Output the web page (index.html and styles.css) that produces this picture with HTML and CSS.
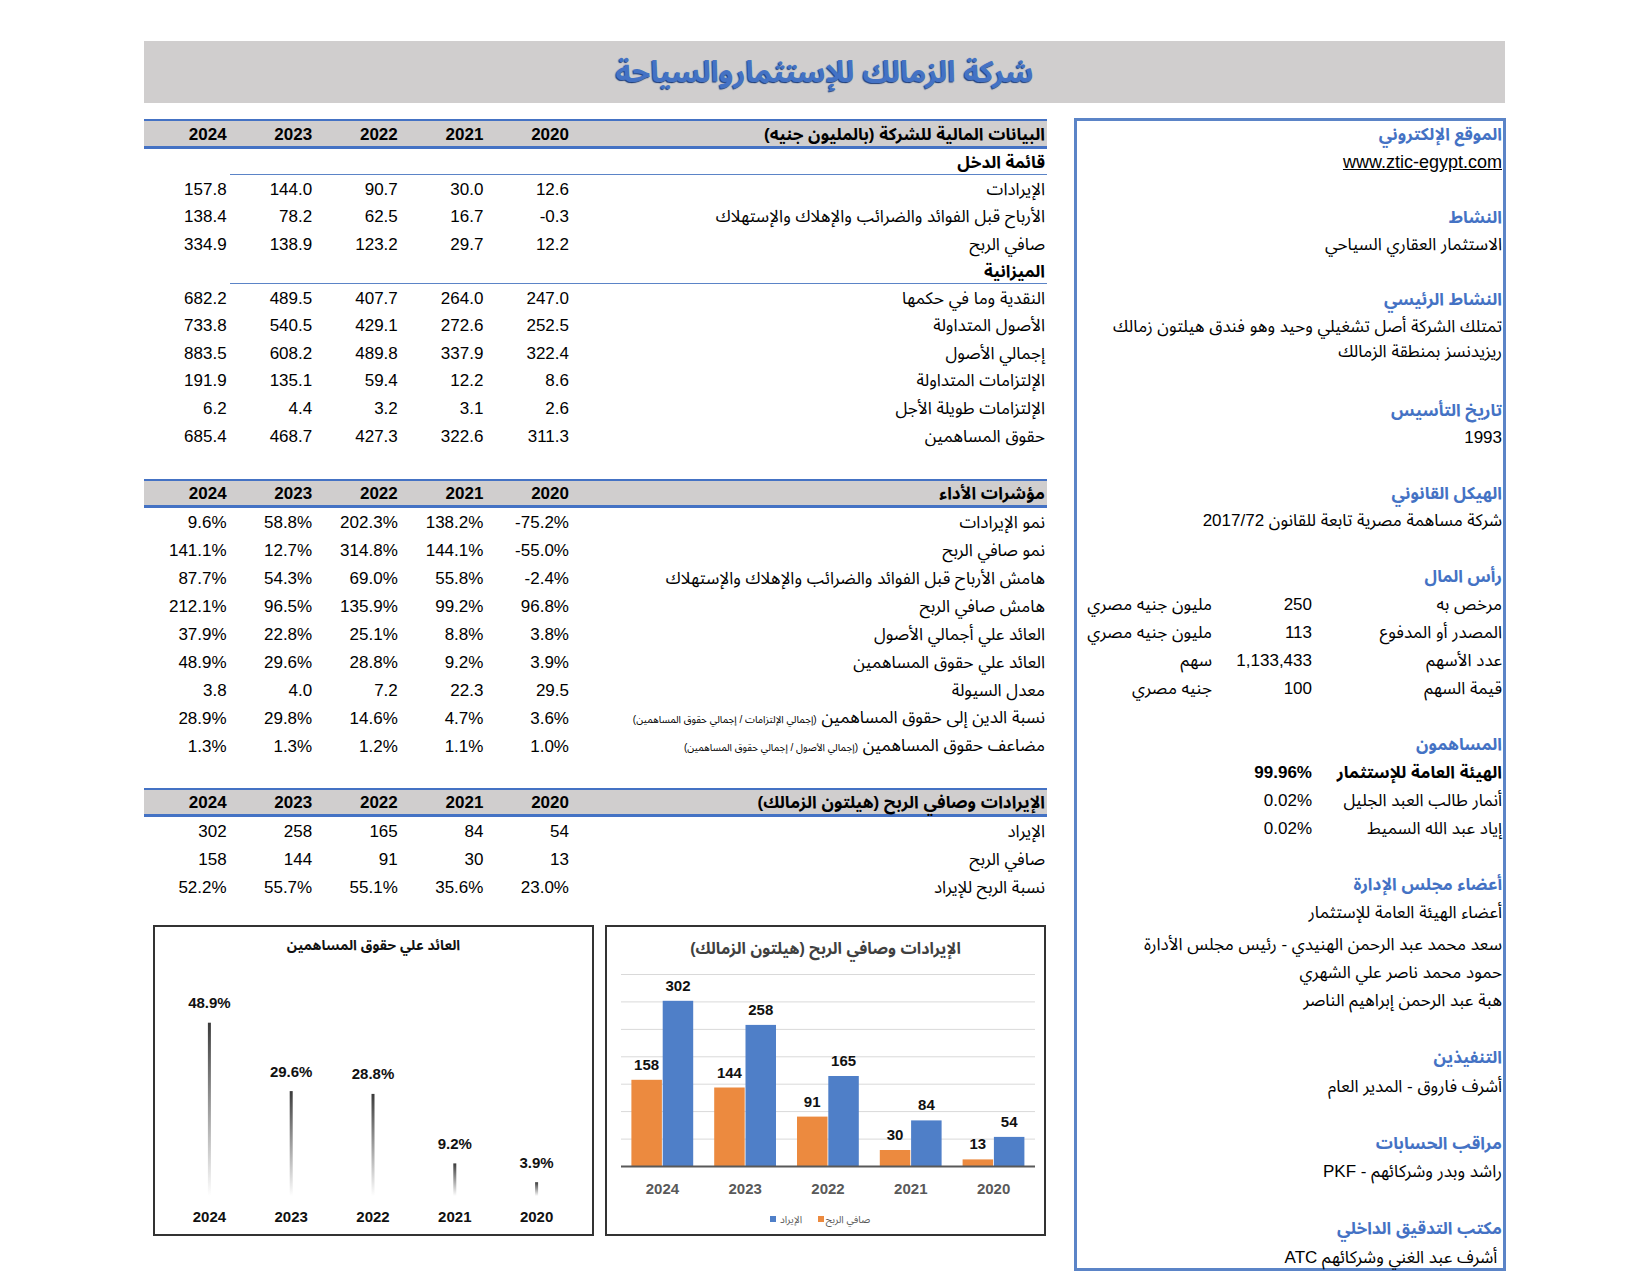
FILE: index.html
```html
<!DOCTYPE html>
<html lang="ar">
<head>
<meta charset="utf-8">
<title>شركة الزمالك للإستثمار والسياحة</title>
<link rel="stylesheet" href="styles.css">
</head>
<body>
<div class="page">
  <div class="title-band"><h1 class="title">شركة الزمالك للإستثماروالسياحة</h1></div>

  <div class="main" dir="rtl">
    <aside class="info">
      <div class="ir lbl">الموقع الإلكتروني</div>
      <div class="ir"><span class="link">www.ztic-egypt.com</span></div>
      <div class="ir"></div>
      <div class="ir lbl">النشاط</div>
      <div class="ir">الاستثمار العقاري السياحي</div>
      <div class="ir"></div>
      <div class="ir lbl">النشاط الرئيسي</div>
      <div class="ir-block">تمتلك الشركة أصل تشغيلي وحيد وهو فندق هيلتون زمالك<br>ريزيدنسز بمنطقة الزمالك</div>
      <div class="ir"></div>
      <div class="ir lbl">تاريخ التأسيس</div>
      <div class="ir">1993</div>
      <div class="ir"></div>
      <div class="ir lbl">الهيكل القانوني</div>
      <div class="jr">شركة مساهمة مصرية تابعة للقانون 2017/72</div>
      <div class="jr"></div>
      <div class="jr lbl">رأس المال</div>
      <div class="jr kv"><span>مرخص به</span><span class="num">250</span><span>مليون جنيه مصري</span></div>
      <div class="jr kv"><span>المصدر أو المدفوع</span><span class="num">113</span><span>مليون جنيه مصري</span></div>
      <div class="jr kv"><span>عدد الأسهم</span><span class="num">1,133,433</span><span>سهم</span></div>
      <div class="jr kv"><span>قيمة السهم</span><span class="num">100</span><span>جنيه مصري</span></div>
      <div class="jr"></div>
      <div class="jr lbl">المساهمون</div>
      <div class="jr kv strong"><span>الهيئة العامة للإستثمار</span><span class="num">99.96%</span></div>
      <div class="jr kv"><span>أنمار طالب العبد الجليل</span><span class="num">0.02%</span></div>
      <div class="jr kv"><span>إياد عبد الله السميط</span><span class="num">0.02%</span></div>
      <div class="jr"></div>
      <div class="jr lbl">أعضاء مجلس الإدارة</div>
      <div class="jr">أعضاء الهيئة العامة للإستثمار</div>
      <div class="jr tall">سعد محمد عبد الرحمن الهنيدي - رئيس مجلس الأدارة</div>
      <div class="jr">حمود محمد ناصر علي الشهري</div>
      <div class="jr">هبة عبد الرحمن إبراهيم الناصر</div>
      <div class="lr"></div>
      <div class="lr lbl">التنفيذين</div>
      <div class="lr">أشرف فاروق - المدير العام</div>
      <div class="lr"></div>
      <div class="lr lbl">مراقب الحسابات</div>
      <div class="lr">راشد وبدر وشركائهم - PKF</div>
      <div class="lr"></div>
      <div class="lr lbl">مكتب التدقيق الداخلي</div>
      <div class="lr">&nbsp;أشرف عبد الغني وشركائهم ATC</div>
    </aside>

    <section class="left">
      <div class="sec s1">
        <div class="thead">
          <div class="c">البيانات المالية للشركة (بالمليون جنيه)</div>
          <div class="c n">2020</div><div class="c n">2021</div><div class="c n">2022</div><div class="c n">2023</div><div class="c n">2024</div>
        </div>
        <div class="tr sub line"><div class="c b">قائمة الدخل</div></div>
        <div class="tr"><div class="c">الإيرادات</div><div class="c n">12.6</div><div class="c n">30.0</div><div class="c n">90.7</div><div class="c n">144.0</div><div class="c n">157.8</div></div>
        <div class="tr"><div class="c">الأرباح قبل الفوائد والضرائب والإهلاك والإستهلاك</div><div class="c n">-0.3</div><div class="c n">16.7</div><div class="c n">62.5</div><div class="c n">78.2</div><div class="c n">138.4</div></div>
        <div class="tr"><div class="c">صافي الربح</div><div class="c n">12.2</div><div class="c n">29.7</div><div class="c n">123.2</div><div class="c n">138.9</div><div class="c n">334.9</div></div>
        <div class="tr sub line"><div class="c b">الميزانية</div></div>
        <div class="tr"><div class="c">النقدية وما في حكمها</div><div class="c n">247.0</div><div class="c n">264.0</div><div class="c n">407.7</div><div class="c n">489.5</div><div class="c n">682.2</div></div>
        <div class="tr"><div class="c">الأصول المتداولة</div><div class="c n">252.5</div><div class="c n">272.6</div><div class="c n">429.1</div><div class="c n">540.5</div><div class="c n">733.8</div></div>
        <div class="tr"><div class="c">إجمالي الأصول</div><div class="c n">322.4</div><div class="c n">337.9</div><div class="c n">489.8</div><div class="c n">608.2</div><div class="c n">883.5</div></div>
        <div class="tr"><div class="c">الإلتزامات المتداولة</div><div class="c n">8.6</div><div class="c n">12.2</div><div class="c n">59.4</div><div class="c n">135.1</div><div class="c n">191.9</div></div>
        <div class="tr"><div class="c">الإلتزامات طويلة الأجل</div><div class="c n">2.6</div><div class="c n">3.1</div><div class="c n">3.2</div><div class="c n">4.4</div><div class="c n">6.2</div></div>
        <div class="tr"><div class="c">حقوق المساهمين</div><div class="c n">311.3</div><div class="c n">322.6</div><div class="c n">427.3</div><div class="c n">468.7</div><div class="c n">685.4</div></div>
      </div>

      <div class="sec s2">
        <div class="thead">
          <div class="c">مؤشرات الأداء</div>
          <div class="c n">2020</div><div class="c n">2021</div><div class="c n">2022</div><div class="c n">2023</div><div class="c n">2024</div>
        </div>
        <div class="tr"><div class="c">نمو الإيرادات</div><div class="c n">-75.2%</div><div class="c n">138.2%</div><div class="c n">202.3%</div><div class="c n">58.8%</div><div class="c n">9.6%</div></div>
        <div class="tr"><div class="c">نمو صافي الربح</div><div class="c n">-55.0%</div><div class="c n">144.1%</div><div class="c n">314.8%</div><div class="c n">12.7%</div><div class="c n">141.1%</div></div>
        <div class="tr"><div class="c">هامش الأرباح قبل الفوائد والضرائب والإهلاك والإستهلاك</div><div class="c n">-2.4%</div><div class="c n">55.8%</div><div class="c n">69.0%</div><div class="c n">54.3%</div><div class="c n">87.7%</div></div>
        <div class="tr"><div class="c">هامش صافي الربح</div><div class="c n">96.8%</div><div class="c n">99.2%</div><div class="c n">135.9%</div><div class="c n">96.5%</div><div class="c n">212.1%</div></div>
        <div class="tr"><div class="c">العائد علي أجمالي الأصول</div><div class="c n">3.8%</div><div class="c n">8.8%</div><div class="c n">25.1%</div><div class="c n">22.8%</div><div class="c n">37.9%</div></div>
        <div class="tr"><div class="c">العائد علي حقوق المساهمين</div><div class="c n">3.9%</div><div class="c n">9.2%</div><div class="c n">28.8%</div><div class="c n">29.6%</div><div class="c n">48.9%</div></div>
        <div class="tr"><div class="c">معدل السيولة</div><div class="c n">29.5</div><div class="c n">22.3</div><div class="c n">7.2</div><div class="c n">4.0</div><div class="c n">3.8</div></div>
        <div class="tr"><div class="c">نسبة الدين إلى حقوق المساهمين <span class="sm">(إجمالي الإلتزامات / إجمالي حقوق المساهمين)</span></div><div class="c n">3.6%</div><div class="c n">4.7%</div><div class="c n">14.6%</div><div class="c n">29.8%</div><div class="c n">28.9%</div></div>
        <div class="tr"><div class="c">مضاعف حقوق المساهمين <span class="sm">(إجمالي الأصول / إجمالي حقوق المساهمين)</span></div><div class="c n">1.0%</div><div class="c n">1.1%</div><div class="c n">1.2%</div><div class="c n">1.3%</div><div class="c n">1.3%</div></div>
      </div>

      <div class="sec s3">
        <div class="thead">
          <div class="c">الإيرادات وصافي الربح (هيلتون الزمالك)</div>
          <div class="c n">2020</div><div class="c n">2021</div><div class="c n">2022</div><div class="c n">2023</div><div class="c n">2024</div>
        </div>
        <div class="tr"><div class="c">الإيراد</div><div class="c n">54</div><div class="c n">84</div><div class="c n">165</div><div class="c n">258</div><div class="c n">302</div></div>
        <div class="tr"><div class="c">صافي الربح</div><div class="c n">13</div><div class="c n">30</div><div class="c n">91</div><div class="c n">144</div><div class="c n">158</div></div>
        <div class="tr"><div class="c">نسبة الربح للإيراد</div><div class="c n">23.0%</div><div class="c n">35.6%</div><div class="c n">55.1%</div><div class="c n">55.7%</div><div class="c n">52.2%</div></div>
      </div>

      <div class="charts">
        <div class="chart">
          <svg width="437" height="307" viewBox="0 0 437 307">
            <text class="ct-title" x="218.5" y="27" text-anchor="middle">الإيرادات وصافي الربح (هيلتون الزمالك)</text>
            <g class="grid">
              <line x1="14" x2="428" y1="47.5" y2="47.5"/>
              <line x1="14" x2="428" y1="74.9" y2="74.9"/>
              <line x1="14" x2="428" y1="102.4" y2="102.4"/>
              <line x1="14" x2="428" y1="129.8" y2="129.8"/>
              <line x1="14" x2="428" y1="157.2" y2="157.2"/>
              <line x1="14" x2="428" y1="184.6" y2="184.6"/>
              <line x1="14" x2="428" y1="212.1" y2="212.1"/>
            </g>
            <g class="bars-o">
              <rect x="24.4" y="152.8" width="30.5" height="86.7"/>
              <rect x="107.2" y="160.5" width="30.5" height="79.0"/>
              <rect x="190.0" y="189.6" width="30.5" height="49.9"/>
              <rect x="272.8" y="223.0" width="30.5" height="16.5"/>
              <rect x="355.6" y="232.4" width="30.5" height="7.1"/>
            </g>
            <g class="bars-b">
              <rect x="55.7" y="73.8" width="30.5" height="165.7"/>
              <rect x="138.5" y="97.9" width="30.5" height="141.6"/>
              <rect x="221.3" y="149.0" width="30.5" height="90.5"/>
              <rect x="304.1" y="193.4" width="30.5" height="46.1"/>
              <rect x="386.9" y="209.9" width="30.5" height="29.6"/>
            </g>
            <line class="axis" x1="14" x2="428" y1="239.5" y2="239.5"/>
            <g class="dl">
              <text x="39.6" y="142.8">158</text>
              <text x="122.4" y="150.5">144</text>
              <text x="205.2" y="179.6">91</text>
              <text x="288" y="213">30</text>
              <text x="370.8" y="222.4">13</text>
              <text x="71" y="63.8">302</text>
              <text x="153.8" y="87.9">258</text>
              <text x="236.6" y="139">165</text>
              <text x="319.4" y="183.4">84</text>
              <text x="402.2" y="199.9">54</text>
            </g>
            <g class="yr">
              <text x="55.4" y="266.5">2024</text>
              <text x="138.2" y="266.5">2023</text>
              <text x="221" y="266.5">2022</text>
              <text x="303.8" y="266.5">2021</text>
              <text x="386.6" y="266.5">2020</text>
            </g>
            <rect class="lg-b" x="163" y="289" width="6" height="6"/>
            <text class="lg" x="184" y="296" text-anchor="middle">الإيراد</text>
            <rect class="lg-o" x="211" y="289" width="6" height="6"/>
            <text class="lg" x="241" y="296" text-anchor="middle">صافي الربح</text>
          </svg>
        </div>
        <div class="chart">
          <svg width="437" height="307" viewBox="0 0 437 307">
            <defs>
              <linearGradient id="fade" x1="0" y1="0" x2="0" y2="1">
                <stop offset="0" stop-color="#3b3b3b"/>
                <stop offset="1" stop-color="#3b3b3b" stop-opacity="0"/>
              </linearGradient>
            </defs>
            <text class="ct-title2" x="218.5" y="23" text-anchor="middle">العائد علي حقوق المساهمين</text>
            <g fill="url(#fade)">
              <rect x="52.9" y="95.7" width="3" height="173.3"/>
              <rect x="134.7" y="164.1" width="3" height="104.9"/>
              <rect x="216.5" y="166.9" width="3" height="102.1"/>
              <rect x="298.3" y="236.4" width="3" height="32.6"/>
              <rect x="380.1" y="255.2" width="3" height="13.8"/>
            </g>
            <g class="pl">
              <text x="54.4" y="81">48.9%</text>
              <text x="136.2" y="149.6">29.6%</text>
              <text x="218" y="152.4">28.8%</text>
              <text x="299.8" y="221.9">9.2%</text>
              <text x="381.6" y="240.7">3.9%</text>
            </g>
            <g class="py">
              <text x="54.4" y="295">2024</text>
              <text x="136.2" y="295">2023</text>
              <text x="218" y="295">2022</text>
              <text x="299.8" y="295">2021</text>
              <text x="381.6" y="295">2020</text>
            </g>
          </svg>
        </div>
      </div>
    </section>
  </div>
</div>
</body>
</html>
```

FILE: styles.css
```css
* { box-sizing: border-box; }

body {
  margin: 0;
  background: #ffffff;
  color: #000000;
  font-family: "Liberation Sans", "Noto Sans Arabic", "Noto Naskh Arabic", "DejaVu Sans", sans-serif;
  font-size: 17px;
  line-height: 20px;
}

.page {
  width: 1362px;
  margin: 41px 0 0 144px;
}

.title-band {
  width: 1361px;
  height: 62px;
  background: #d0cece;
  display: flex;
  align-items: center;
  justify-content: center;
}

.title {
  margin: 0;
  font-size: 29.5px;
  line-height: 36px;
  font-weight: bold;
  color: #4472c4;
  text-shadow: -1px 1px 1px #1f3f7a;
}

.main {
  display: flex;
  gap: 27px;
  margin-top: 15px;
}

/* ---------- right info panel ---------- */
.info {
  width: 432px;
  height: 1153px;
  border: 3px solid #5b84c7;
  padding: 0 1px 0 0;
  flex: none;
}

.ir, .jr, .lr, .ir-block {
  white-space: nowrap;
  display: flex;
  align-items: center;
}
.ir { height: 27.6px; }
.jr { height: 28px; }
.jr.tall { height: 32px; padding-top: 4px; }
.lr { height: 28.5px; }
.ir-block {
  height: 55.2px;
  display: block;
  line-height: 25px;
}

.lbl {
  color: #4472c4;
  font-weight: bold;
}

.link {
  text-decoration: underline;
  font-size: 18px;
}

.kv {
  display: grid;
  grid-template-columns: 190px 100px 1fr;
  align-items: center;
}
.kv .num {
  direction: ltr;
  text-align: right;
}
.kv.strong span { font-weight: bold; }

/* ---------- left tables ---------- */
.left {
  width: 903px;
  flex: none;
  padding-top: 1px;
}

.thead, .tr {
  display: grid;
  grid-template-columns: 1fr repeat(5, 85.6px);
  align-items: center;
}

.thead {
  height: 30px;
  background: #d0cece;
  border-top: 2px solid #4472c4;
  border-bottom: 3px solid #4472c4;
  font-weight: bold;
}
.s2 .thead, .s3 .thead { height: 29px; }
.thead .c { padding-top: 3px; }

.tr { height: 28px; }
.s1 .tr { height: 27.6px; }
.s1 .tr.sub { height: 26px; }

.line {
  background: linear-gradient(#5b84c7, #5b84c7) no-repeat right bottom / calc(100% - 85.6px) 1px;
}

.c {
  white-space: nowrap;
  padding-right: 2px;
  padding-top: 2px;
}
.c.n {
  direction: ltr;
  text-align: right;
  padding-right: 3px;
}
.b { font-weight: bold; }
.sm { font-size: 10px; }

.s2 { margin-top: 29.4px; }
.s3 { margin-top: 28px; }

/* ---------- charts ---------- */
.charts {
  display: flex;
  gap: 11px;
  padding-right: 1px;
  margin-top: 24px;
}

.chart {
  width: 441px;
  height: 311px;
  border: 2px solid #333333;
  background: #ffffff;
}
.chart svg { display: block; }

.ct-title {
  font: bold 16px "Liberation Sans", "Noto Sans Arabic", "DejaVu Sans", sans-serif;
  fill: #404040;
}
.ct-title2 {
  font: bold 14px "Liberation Sans", "Noto Sans Arabic", "DejaVu Sans", sans-serif;
  fill: #111111;
}
.grid line { stroke: #d9d9d9; stroke-width: 1; }
.axis { stroke: #595959; stroke-width: 2; }
.bars-o rect, .lg-o { fill: #ec8a3f; }
.bars-b rect, .lg-b { fill: #4f7fc8; }

.dl text, .yr text, .pl text, .py text {
  text-anchor: middle;
  font: bold 15px "Liberation Sans", sans-serif;
}
.dl text { fill: #111111; }
.yr text { fill: #595959; }
.pl text, .py text { fill: #111111; }
.lg {
  font: 10px "Liberation Sans", "Noto Sans Arabic", "DejaVu Sans", sans-serif;
  fill: #595959;
}
```
